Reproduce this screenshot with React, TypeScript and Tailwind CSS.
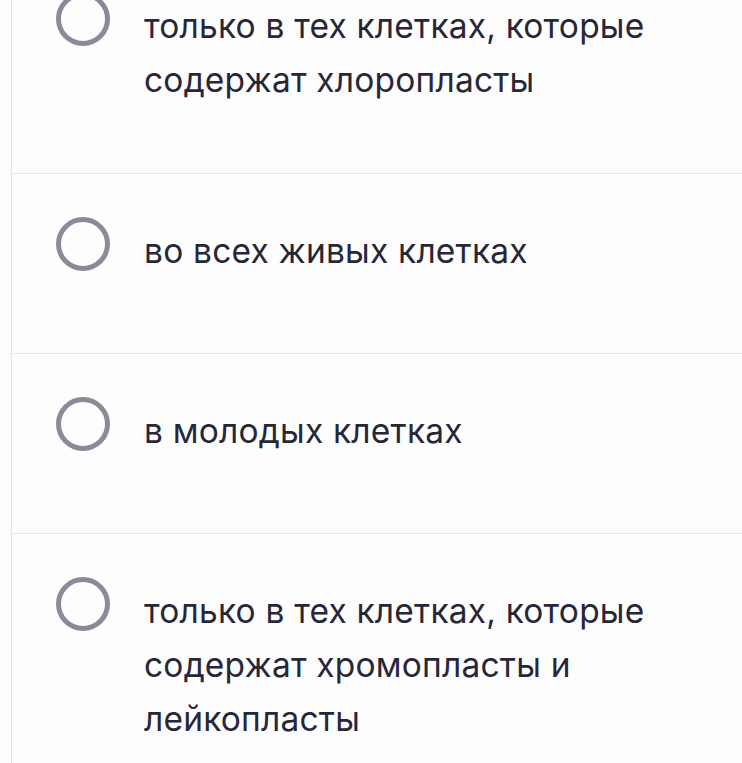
const options = [
  'только в тех клетках, которые содержат хлоропласты',
  'во всех живых клетках',
  'в молодых клетках',
  'только в тех клетках, которые содержат хромопласты и лейкопласты',
];

function RadioRing() {
  return (
    <span className="mt-[-7px] block h-[54px] w-[54px] shrink-0 rounded-full border-[5px] border-[#8b8a9a]" />
  );
}

export default function App() {
  return (
    <div className="h-[763px] overflow-hidden bg-[#fdfdfe] pl-[11px] font-['Inter','Noto_Sans',sans-serif]">
      <ul className="-mt-[51px] border-l border-[#e4e5eb]">
        {options.map((text) => (
          <li
            key={text}
            className="flex min-h-[180px] items-start gap-[34px] border-b border-[#e4e5eb] pb-[66px] pl-[44px] pr-[50px] pt-[50px]"
          >
            <RadioRing />
            <span className="text-[33.5px] leading-[54px] tracking-[0.2px] text-[#272738]">{text}</span>
          </li>
        ))}
      </ul>
    </div>
  );
}
